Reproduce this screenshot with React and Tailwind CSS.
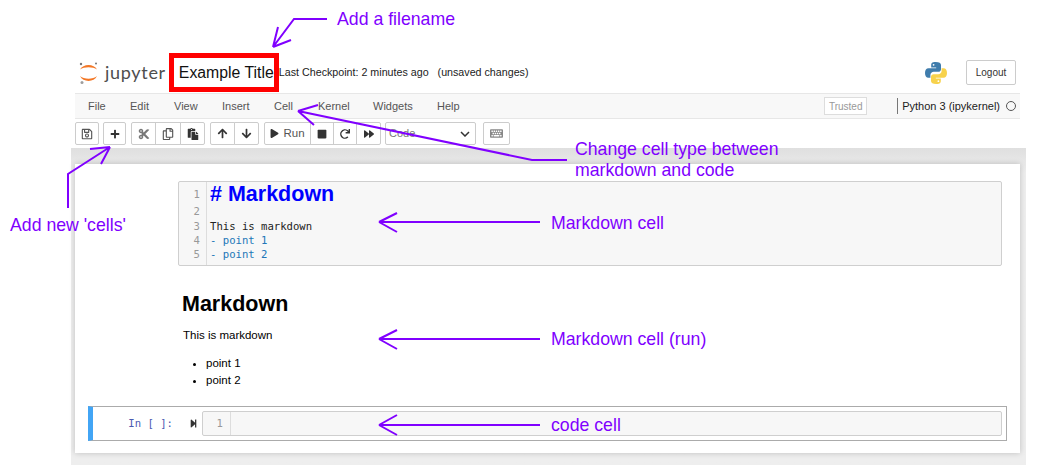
import {
  FaArrowDown,
  FaArrowUp,
  FaCut,
  FaForward,
  FaKeyboard,
  FaPaste,
  FaPlay,
  FaPlus,
  FaRedo,
  FaRegCopy,
  FaRegSave,
  FaStop,
  FaStepForward,
} from "react-icons/fa";

const menuItems = [
  ["File", "w-[42px]"],
  ["Edit", "w-[44px]"],
  ["View", "w-[48px]"],
  ["Insert", "w-[52px]"],
  ["Cell", "w-[44px]"],
  ["Kernel", "w-[55px]"],
  ["Widgets", "w-[64px]"],
  ["Help", "w-[50px]"],
];

const btnBase =
  "flex h-[23px] items-center border border-[#cccccc] bg-white text-[#333333]";
const btn = `${btnBase} justify-center`;

function JupyterLogo() {
  return (
    <div className="flex items-center">
      <svg width="22" height="24" viewBox="0 0 22 24" className="mr-[5px]">
        <path d="M2 8.5 C5 2.5 16 2.5 19 8.5 C15 5.5 6 5.5 2 8.5 Z" fill="#f37726" />
        <path d="M2 15 C5 21.5 16 21.5 19 15 C15 18.5 6 18.5 2 15 Z" fill="#f37726" />
        <circle cx="3" cy="3" r="1.2" fill="#767677" />
        <circle cx="18" cy="2.5" r="1" fill="#767677" />
        <circle cx="4" cy="21.5" r="1.5" fill="#9e9e9e" />
      </svg>
      <span className="text-[18px] tracking-[0.7px] text-[#4e4e4e] font-['Lato',sans-serif]">
        jupyter
      </span>
    </div>
  );
}

function PythonLogo() {
  return (
    <svg width="24" height="24" viewBox="0 0 24 24">
      <path
        d="M11.8 1 C7.5 1 7.2 2.6 7.2 4 V6.5 H12.2 V7.3 H4.5 C2.3 7.3 1 9 1 12 C1 15.2 2.3 16.8 4.4 16.8 H6.4 V14 C6.4 12.2 7.9 10.8 9.7 10.8 H14.4 C15.9 10.8 17 9.6 17 8.2 V4 C17 2.3 15.2 1 11.8 1 Z"
        fill="#3f7cac"
      />
      <path
        d="M12.2 23 C16.5 23 16.8 21.4 16.8 20 V17.5 H11.8 V16.7 H19.5 C21.7 16.7 23 15 23 12 C23 8.8 21.7 7.2 19.6 7.2 H17.6 V10 C17.6 11.8 16.1 13.2 14.3 13.2 H9.6 C8.1 13.2 7 14.4 7 15.8 V20 C7 21.7 8.8 23 12.2 23 Z"
        fill="#f7d24c"
      />
      <circle cx="9.6" cy="3.8" r="0.9" fill="#fff" />
      <circle cx="14.4" cy="20.2" r="0.9" fill="#fff" />
    </svg>
  );
}

function Toolbar() {
  return (
    <div className="mt-[3px] flex h-[23px] items-center pl-[4px] text-[13px]">
      <button className={`${btn} w-[24px] rounded-[2px]`}>
        <FaRegSave size={12} className="text-[#555555]" />
      </button>
      <button className={`${btn} ml-[4px] w-[23px] rounded-[2px]`}>
        <FaPlus size={10} />
      </button>
      <div className="ml-[5px] flex">
        <button className={`${btn} w-[25px] rounded-l-[2px]`}>
          <FaCut size={12} className="text-[#777777]" />
        </button>
        <button className={`${btn} -ml-px w-[26px]`}>
          <FaRegCopy size={12} className="text-[#555555]" />
        </button>
        <button className={`${btn} -ml-px w-[25px] rounded-r-[2px]`}>
          <FaPaste size={12} />
        </button>
      </div>
      <div className="ml-[5px] flex">
        <button className={`${btn} w-[25px] rounded-l-[2px]`}>
          <FaArrowUp size={11} />
        </button>
        <button className={`${btn} -ml-px w-[25px] rounded-r-[2px]`}>
          <FaArrowDown size={11} />
        </button>
      </div>
      <div className="ml-[5px] flex">
        <button className={`${btn} w-[47px] gap-[4px] rounded-l-[2px] text-[11.5px] text-[#555555]`}>
          <FaPlay size={9} className="text-[#333333]" />
          Run
        </button>
        <button className={`${btn} -ml-px w-[24px]`}>
          <FaStop size={10} />
        </button>
        <button className={`${btn} -ml-px w-[24px]`}>
          <FaRedo size={10} />
        </button>
        <button className={`${btn} -ml-px w-[25px] rounded-r-[2px]`}>
          <FaForward size={10} />
        </button>
      </div>
      <div className={`${btnBase} ml-[4px] w-[91px] justify-between rounded-[2px] pr-[5px] pl-[3px] text-[11px]`}>
        <span className="text-[#777777]">Code</span>
        <svg width="10" height="6" viewBox="0 0 10 6">
          <path d="M1 1 L5 5 L9 1" fill="none" stroke="#333" strokeWidth="1.5" />
        </svg>
      </div>
      <button className={`${btn} ml-[7px] w-[27px] rounded-[2px]`}>
        <FaKeyboard size={13} className="text-[#888888]" />
      </button>
    </div>
  );
}

function Annotations() {
  return (
    <svg
      width="1042"
      height="476"
      viewBox="0 0 1042 476"
      fill="none"
      stroke="#8000ff"
      strokeWidth="2"
      className="pointer-events-none absolute top-0 left-0"
    >
      <path d="M327 19 H294 L273 47 M273 47 L291 40 M273 47 L278 27" />
      <path d="M567 160 H532 L298 111 M298 111 L314 125 M298 111 L318 105" />
      <path d="M68 208 V174 L110 147 M110 147 L90 149 M110 147 L101 164" />
      <path d="M540 222 H379 M379 222 L397 213 M379 222 L397 232" />
      <path d="M540 339 H379 M379 339 L397 330 M379 339 L397 349" />
      <path d="M540 425 H379 M379 425 L397 415 M379 425 L397 435" />
    </svg>
  );
}

function Label({ className, children }) {
  return (
    <div className={`absolute text-[17.7px] leading-[21px] whitespace-nowrap text-[#8000ff] ${className}`}>
      {children}
    </div>
  );
}

export default function App() {
  return (
    <div className="relative h-[476px] w-[1042px] overflow-hidden bg-white pt-[52px] pl-[71px] font-['Liberation_Sans',sans-serif]">
      <div className="w-[955px]">
        <div className="flex h-[41px] items-center pr-[10px] pl-[7px]">
          <JupyterLogo />
          <div className="ml-[3px] flex h-[39px] w-[110px] shrink-0 items-center border-[5px] border-[#ff0000] pl-[5px] text-[15.8px] whitespace-nowrap text-[#111111]">
            Example Title
          </div>
          <span className="text-[10.7px] text-[#222222]">Last Checkpoint: 2 minutes ago</span>
          <span className="ml-[9px] text-[10.7px] text-[#222222]">(unsaved changes)</span>
          <div className="mr-[18px] ml-auto">
            <PythonLogo />
          </div>
          <button className="flex h-[25px] w-[50px] items-center justify-center rounded-[2px] border border-[#cccccc] text-[10px] text-[#333333]">
            Logout
          </button>
        </div>

        <div className="ml-[4px] flex h-[26px] w-[945px] items-center border-y border-[#e7e7e7] bg-[#f8f8f8] text-[11px] text-[#555555]">
          <div className="flex items-center pl-[6px]">
            {menuItems.map(([name, width]) => (
              <span key={name} className={`${width} pl-[7px]`}>
                {name}
              </span>
            ))}
          </div>
          <span className="ml-auto flex h-[18px] w-[43px] items-center justify-center border border-[#dddddd] bg-white text-[10px] text-[#999999]">
            Trusted
          </span>
          <span className="ml-[30px] border-l border-[#777777] pl-[4px] text-[11px] text-[#222222]">
            Python 3 (ipykernel)
          </span>
          <span className="mr-[4px] ml-[6px] h-[10px] w-[10px] rounded-full border-[1.5px] border-[#555555]" />
        </div>

        <Toolbar />

        <div className="mt-[3px] h-[317px] bg-gradient-to-b from-[#dfdfdf] from-0% to-[#eeeeee] to-[8%] px-[4px] pt-[16px]">
          <div className="h-[289px] w-[945px] bg-white pt-[17px] shadow-[0_0_6px_rgba(0,0,0,0.2)]">
            <div className="ml-[103px] flex h-[85px] w-[824px] rounded-[2px] border border-[#cfcfcf] bg-[#f7f7f7] font-['DejaVu_Sans_Mono',monospace] text-[10.6px]">
              <div className="flex w-[28px] flex-col items-end border-r border-[#dddddd] pt-[4px] pr-[6px] text-[#999999]">
                <span className="flex h-[18px] items-center">1</span>
                <span className="h-[15px] leading-[15px]">2</span>
                <span className="h-[14px] leading-[14px]">3</span>
                <span className="h-[14px] leading-[14px]">4</span>
                <span className="h-[14px] leading-[14px]">5</span>
              </div>
              <div className="flex flex-col pl-[3px]">
                <span className="h-[23px] font-['Liberation_Sans',sans-serif] text-[21.5px] leading-[24px] font-bold text-[#0000ff]">
                  # Markdown
                </span>
                <span className="h-[14px]" />
                <span className="h-[14px] leading-[14px] text-[#222222]">This is markdown</span>
                <span className="h-[14px] leading-[14px] text-[#2176b8]">- point 1</span>
                <span className="h-[14px] leading-[14px] text-[#2176b8]">- point 2</span>
              </div>
            </div>

            <div className="mt-[25px] ml-[108px] text-[#000000]">
              <h1 className="-ml-px text-[21.5px] leading-[26px] font-bold">Markdown</h1>
              <p className="mt-[10px] text-[11.5px] leading-[16px]">This is markdown</p>
              <ul className="mt-[12px] list-disc pl-[23px] text-[11.5px] leading-[17px]">
                <li>point 1</li>
                <li>point 2</li>
              </ul>
            </div>

            <div className="mt-[17px] ml-[13px] flex h-[35px] w-[919px] items-center border border-[#ababab] border-l-[5px] border-l-[#42a5f5] font-['DejaVu_Sans_Mono',monospace] text-[10.6px]">
              <span className="w-[80px] text-right text-[#4a5ab0]">In [ ]:</span>
              <FaStepForward size={9} className="ml-[16px] text-[#333333]" />
              <div className="ml-[4px] flex h-[25px] w-[800px] rounded-[2px] border border-[#cfcfcf] bg-[#f7f7f7]">
                <span className="flex w-[28px] items-center justify-end border-r border-[#dddddd] pr-[7px] text-[#999999]">
                  1
                </span>
              </div>
            </div>
          </div>
        </div>
      </div>

      <Annotations />
      <Label className="top-[9px] left-[337px]">Add a filename</Label>
      <Label className="top-[139px] left-[575px]">
        Change cell type between
        <br />
        markdown and code
      </Label>
      <Label className="top-[215px] left-[10px]">Add new 'cells'</Label>
      <Label className="top-[213px] left-[551px]">Markdown cell</Label>
      <Label className="top-[329px] left-[551px]">Markdown cell (run)</Label>
      <Label className="top-[415px] left-[551px]">code cell</Label>
    </div>
  );
}
